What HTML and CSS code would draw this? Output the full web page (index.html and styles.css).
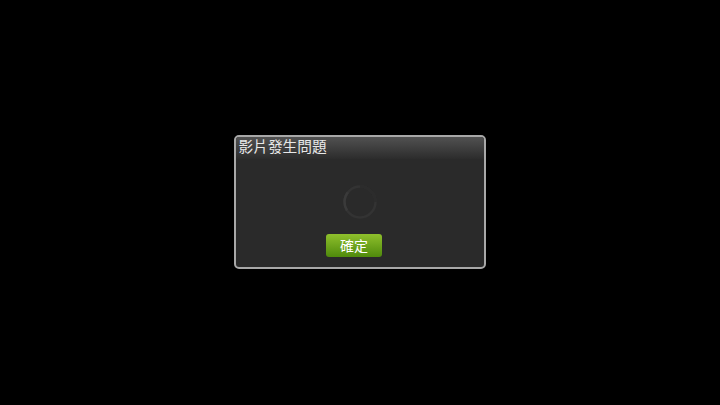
FILE: index.html
```html
<!DOCTYPE html>
<html lang="zh-Hant">
<head>
<meta charset="utf-8">
<title>影片發生問題</title>
<link rel="stylesheet" href="styles.css">
</head>
<body>
<div class="dialog">
  <div class="title">影片發生問題</div>
  <div class="body">
    <svg class="spinner" width="36" height="36" viewBox="0 0 36 36" aria-hidden="true">
      <circle cx="18" cy="18" r="15.5" fill="none" stroke="#333" stroke-width="2.5"/>
      <path d="M18 2.5A15.5 15.5 0 0 1 33.5 18" fill="none" stroke="#2c2c2c" stroke-width="2.5"/>
      <path d="M6 8.2A15.5 15.5 0 0 0 5 26.5" fill="none" stroke="#3a3a3a" stroke-width="2.5"/>
    </svg>
    <div class="button">確定</div>
  </div>
</div>
</body>
</html>
```
FILE: styles.css
```css
html, body {
  margin: 0;
  width: 720px;
  height: 405px;
  background: #000;
  overflow: hidden;
}
body {
  display: flex;
  align-items: center;
  justify-content: center;
  font-family: "Noto Sans CJK TC", "Noto Sans", sans-serif;
}
.dialog {
  box-sizing: border-box;
  width: 252px;
  height: 134px;
  margin-top: -1px;
  border: 2px solid #a8a8a8;
  border-radius: 5px;
  background: #2a2a2a;
  display: flex;
  flex-direction: column;
  overflow: hidden;
}
.title {
  height: 22px;
  padding-left: 2.5px;
  color: #e8e8e8;
  font-size: 14.7px;
  line-height: 18px;
  background: linear-gradient(#515151, #2c2c2c);
}
.body {
  flex: 1;
  display: flex;
  flex-direction: column;
  align-items: center;
  padding-top: 25px;
}
.spinner {
  display: block;
}
.button {
  margin: 14px 12px 0 0;
  width: 56px;
  height: 23px;
  box-sizing: border-box;
  border-radius: 3px;
  background: linear-gradient(#8fc02c, #4f8a0c);
  color: #fff;
  font-size: 14px;
  line-height: 23px;
  text-align: center;
}
```
